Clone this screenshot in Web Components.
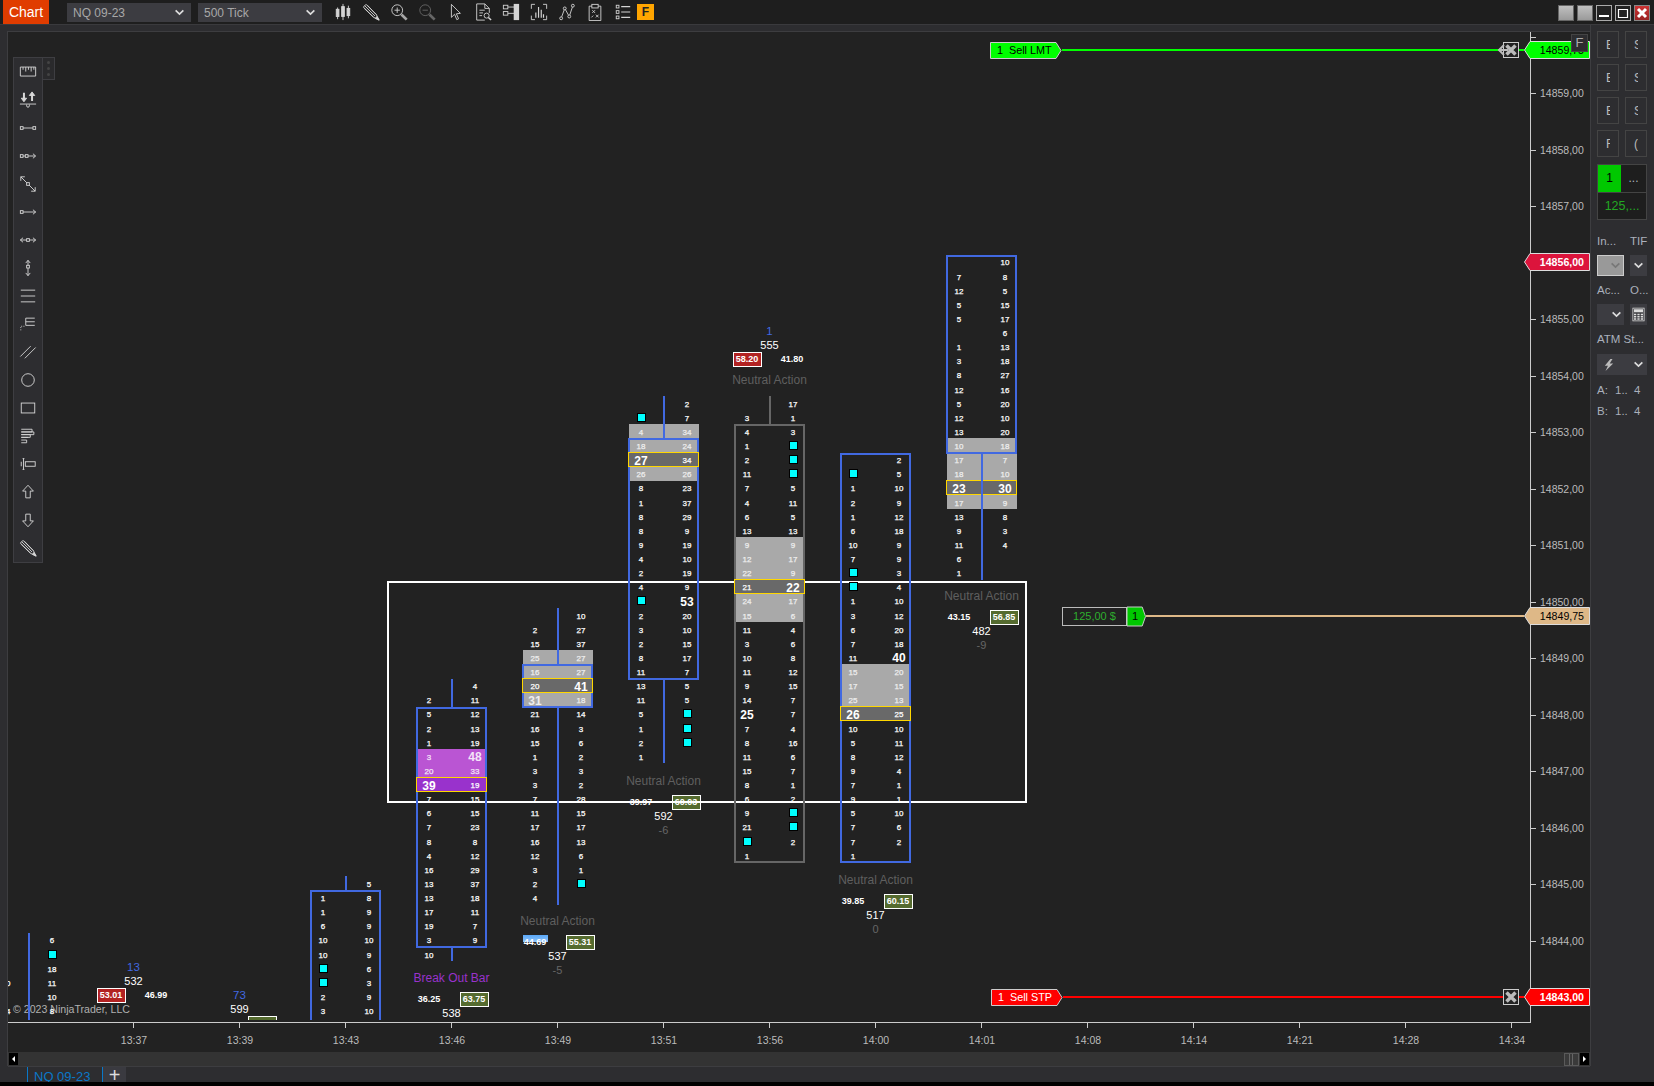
<!DOCTYPE html>
<html>
<head>
<meta charset="utf-8">
<title>Chart</title>
<style>
  html, body { margin: 0; padding: 0; background: #000; }
  body { width: 1654px; height: 1086px; overflow: hidden; font-family: "Liberation Sans", Arial, sans-serif; }
  nt-app { display: block; }
</style>
</head>
<body>
<nt-app>
  <nt-toolbar slot="top"></nt-toolbar>
  <nt-chart slot="chart">
    <fp-stats slot="plot" x="133.5" pct-y="995" reverse left="53.01" right="46.99" red="left" volume="532" delta="13"></fp-stats>
    <fp-stats slot="plot" x="239.5" pct-y="1023" reverse left="45.45" right="54.55" green="right" volume="599" delta="73"></fp-stats>
    <fp-stats slot="plot" x="451.5" pct-y="999" signal="Break Out Bar" purple left="36.25" right="63.75" green="right" volume="538" delta="-1"></fp-stats>
    <fp-stats slot="plot" x="557.5" pct-y="942" signal="Neutral Action" flag left="44.69" right="55.31" green="right" volume="537" delta="-5"></fp-stats>
    <fp-stats slot="plot" x="663.5" pct-y="801.7" signal="Neutral Action" left="39.97" right="60.03" green="right" volume="592" delta="-6"></fp-stats>
    <fp-stats slot="plot" x="769.5" pct-y="359" reverse signal="Neutral Action" left="58.20" right="41.80" red="left" volume="555" delta="1"></fp-stats>
    <fp-stats slot="plot" x="875.5" pct-y="900.7" signal="Neutral Action" left="39.85" right="60.15" green="right" volume="517" delta="0"></fp-stats>
    <fp-stats slot="plot" x="981.5" pct-y="617" signal="Neutral Action" left="43.15" right="56.85" green="right" volume="482" delta="-9"></fp-stats>

    <fp-bar slot="plot" x="28.5" first="63" wick="63,69" rows=". 6,. #,. 18,10 11,. 10,14 8,. 5"></fp-bar>
    <fp-bar slot="plot" x="345.5" first="59" box="60,70" wick="59,59" rows=". 5,1 8,1 9,6 9,10 10,10 9,# 6,# 3,2 9,3 10,4 7"></fp-bar>
    <fp-bar slot="plot" x="451.5" first="45" box="47,63" wick="45,46;64,64"
      rows=". 4,2 11,5 12,2 13,1 19,p:3 +48,p:20 33,q:+39 19,7 15,6 15,7 23,8 8,4 12,16 29,13 37,13 18,17 11,19 7,3 9,10 ."></fp-bar>
    <fp-bar slot="plot" x="557.5" first="40" box="44,46" wick="40,43;47,60"
      rows=". 10,2 27,15 37,g:25 27,g:16 27,k:20 +41,g:+31 18,21 14,16 3,15 6,1 2,3 3,3 2,7 28,11 15,17 17,16 13,12 6,3 1,2 #,4 ."></fp-bar>
    <fp-bar slot="plot" x="663.5" first="25" box="28,44" wick="25,27;45,50"
      rows=". 2,# 7,g:4 34,g:18 24,k:+27 34,g:26 26,8 23,1 37,8 29,8 9,9 19,4 10,2 19,4 9,# +53,2 20,3 10,2 15,8 17,11 7,13 5,11 5,5 #,1 #,2 #,1 ."></fp-bar>
    <fp-bar slot="plot" x="769.5" first="25" box="27,57" wick="25,26" gray
      rows=". 17,3 1,4 3,1 #,2 #,11 #,7 5,4 11,6 5,13 13,g:9 9,g:12 17,g:22 9,k:21 +22,g:24 17,g:15 6,11 4,3 6,10 8,11 12,9 15,14 7,+25 7,7 4,8 16,11 6,15 7,8 1,6 2,9 #,21 #,# 2,1 ."></fp-bar>
    <fp-bar slot="plot" x="875.5" first="29" box="29,57"
      rows=". 2,# 5,1 10,2 9,1 12,6 18,10 9,7 9,# 3,# 4,1 10,3 12,6 20,7 18,11 +40,g:15 20,g:17 15,g:25 13,k:+26 25,10 10,5 11,8 12,9 4,7 1,9 1,5 10,7 6,7 2,1 ."></fp-bar>
    <fp-bar slot="plot" x="981.5" first="15" box="15,28" wick="29,37"
      rows=". 10,7 8,12 5,5 15,5 17,. 6,1 13,3 18,8 27,12 16,5 20,12 10,13 20,g:10 18,g:17 7,g:18 10,k:+23 +30,g:17 9,13 8,9 3,11 4,6 .,1 ."></fp-bar>

    <nt-copyright slot="plot">© 2023 NinjaTrader, LLC</nt-copyright>
    <nt-draw-rect slot="plot" left="379" top="549" width="640" height="222"></nt-draw-rect>

    <nt-draw-tools slot="plot"></nt-draw-tools>

    <nt-order-line y="50" from="990" kind="lmt" qty="1" label="Sell LMT" price="14859,75"></nt-order-line>
    <nt-order-line y="997" from="991" kind="stp" qty="1" label="Sell STP" price="14843,00"></nt-order-line>
    <nt-order-line y="616" from="1062" kind="pos" qty="1" label="125,00 $" price="14849,75"></nt-order-line>
    <nt-order-line y="262" from="1524" kind="alert" price="14856,00"></nt-order-line>
    <nt-f-button>F</nt-f-button>
  </nt-chart>
  <nt-order-panel slot="side"></nt-order-panel>
  <nt-tabs slot="bottom"></nt-tabs>
</nt-app>

<script>
const ICONS = {
  // top toolbar
  candles: '<path d="M4 5v13M10 1v18M16 3v14"/><rect x="2.5" y="7" width="3" height="8" fill="currentColor"/><rect x="8.5" y="4" width="3" height="11" fill="currentColor"/><rect x="14.5" y="6" width="3" height="8" fill="currentColor"/>',
  pencil: '<path d="M1.5 4.5 4.5 1.5 16 13l3 6-6-3z"/><path d="M3 3 14.5 14.5M6 2.5 16 13M2.5 6 13 16" /><path d="M16.5 15 19 19l-4-2z" fill="currentColor"/>',
  zoomin: '<circle cx="8" cy="8" r="6"/><path d="M8 5v6M5 8h6"/><path d="M12.7 12.7 18.5 18.5" stroke-width="3" opacity=".75"/>',
  zoomout: '<circle cx="8" cy="8" r="6"/><path d="M5 8h6"/><path d="M12.7 12.7 18.5 18.5" stroke-width="3"/>',
  cursor: '<path d="M6 1.5V16l3.5-3.5 2.5 6 2-1-2.5-5.5 4.5-.5z"/>',
  docsearch: '<path d="M12 19H3V1h9l5 5v5M12 1v5h5M6 8h6M6 11h4M6 14h3"/><circle cx="14" cy="14" r="2.8"/><path d="M16 16l3 3" stroke-width="1.6"/>',
  tree: '<rect x="1.5" y="2.5" width="5" height="4"/><rect x="1.5" y="9.5" width="5" height="4"/><path d="M6.5 4.500h7M6.500 11.500h7"/><rect x="13" y="1" width="6" height="18" fill="currentColor" stroke="none"/>',
  bracket: '<path d="M5.500 1.500h-4v5M14.500 1.500h4v5M1.500 14v4.500h4M18.500 14v4.500h-4"/><path d="M6.500 16.500v-6M9.500 16.500v-12M12.500 16.500v-9M15 16.500v-4" stroke-width="1.300"/>',
  linechart: '<path d="M3.500 17 7.500 6l5 9 4-12"/><circle cx="3.500" cy="17" r="1.600" fill="#222"/><circle cx="7.500" cy="6" r="1.600" fill="#222"/><circle cx="12.500" cy="15" r="1.600" fill="#222"/><circle cx="16.500" cy="3" r="1.600" fill="#222"/>',
  clipboard: '<path d="M6.500 3.500h-3v16h13v-16h-3"/><rect x="6.500" y="1.500" width="7" height="4"/><path d="M7 8l3 3M10 8l-3 3M11 13l3 3M14 13l-3 3M6 16l2-2"/>',
  list: '<rect x="2.500" y="2.500" width="3" height="3"/><rect x="2.500" y="8.500" width="3" height="3"/><rect x="2.500" y="14.500" width="3" height="3"/><path d="M8 4h10M8 10h10M8 16h10" stroke-width="1.300"/>',
  // drawing tools
  ruler: '<path d="M1.500 4.500h17v10h-17zM4.500 4.500v3M7.500 4.500v5M10.500 4.500v3M13.500 4.500v5M16.500 4.500v3" />',
  buysell: '<path d="M5.500 2v8M14.500 3v8" stroke-width="2.200"/><path d="M2.500 8 5.500 12 8.500 8zM11.500 5 14.500 1l3 4z" fill="currentColor"/><path d="M1 14.500h18M8.500 15v1.500a1.500 1.500 0 0 0 3 0V15"/>',
  line: '<rect x="1.500" y="8.500" width="3" height="3"/><rect x="15.500" y="8.500" width="3" height="3"/><path d="M4.500 10h11"/>',
  ray: '<rect x="1.500" y="8.500" width="3" height="3"/><rect x="7" y="8.500" width="3" height="3"/><path d="M4.500 10H7M10 10h8M15.500 7.500 18.500 10l-3 2.500"/>',
  diag: '<path d="M2 2l16 16M2 6.500V2h4.500M18 13.500V18h-4.500"/><rect x="8.500" y="8.500" width="3" height="3" fill="#2d2d30"/>',
  arrowline: '<rect x="1.500" y="8.500" width="3" height="3"/><path d="M4.500 10h14M15.500 7.500 18.500 10l-3 2.500"/>',
  hrange: '<path d="M1.500 10h17M4.500 7.500 1.500 10l3 2.500M15.500 7.500l3 2.500-3 2.500"/><rect x="8.500" y="8.500" width="3" height="3" fill="#2d2d30"/>',
  vrange: '<path d="M10 1.500v17M7.500 4.500 10 1.500l2.500 3M7.500 15.500 10 18.500l2.500-3"/><rect x="8.500" y="7" width="3" height="3" fill="#2d2d30"/>',
  hlines: '<path d="M2 3.500h16M2 10h16M2 16.500h16"/>',
  fib: '<path d="M7.500 3.500h10M7.500 7.500h10M7.500 11.500h10M7.500 3.500v8"/><path d="M2 17v-4.500h5" stroke-dasharray="1 1.500"/>',
  channel: '<path d="M1.500 15 13 3.500M6.500 17 18.500 5"/>',
  circle: '<circle cx="10" cy="10" r="7"/>',
  rect: '<rect x="2.500" y="4.500" width="15" height="11"/>',
  stairs: '<path d="M2.500 2.500h12v3h-12M2.500 5.500h14v3h-14M2.500 8.500h10v3h-10M2.500 11.500h8M2.500 14.500h6v3h-6"/>',
  textbox: '<rect x="7" y="7.500" width="11" height="5"/><path d="M2.500 7.500v5M6 4h-2M6 16h-2M5 4v12"/>',
  up: '<path d="M10 2.500 4 9h3.500v7.500h5V9H16z"/>',
  down: '<path d="M10 17.500 4 11h3.500V3.500h5V11H16z"/>',
  bolt: '<path d="M12 1.500 4 11h4.500L5 18.500 16 8h-5l4-6.500z" fill="currentColor" stroke="none"/>',
  chev: '<path d="M3 6l7 7 7-7" stroke-width="3"/>',
  calc: '<rect x="2.500" y="1.500" width="15" height="17"/><rect x="4" y="3" width="12" height="4" fill="currentColor" stroke="none"/><path d="M4 10h3M8.500 10h3M13 10h3M4 13h3M8.500 13h3M13 13h3M4 16h3M8.500 16h3M13 16h3" stroke-width="2"/>',
};

class NtIcon extends HTMLElement {
  connectedCallback() {
    const size = this.getAttribute('size') || 20;
    this.attachShadow({ mode: 'open' });
    this.shadowRoot.innerHTML = `
      <style>
        :host { display: inline-flex; align-items: center; justify-content: center; color: #d4d4d4; }
        svg { display: block; fill: none; stroke: currentColor; stroke-width: 1; }
      </style>
      <svg width="${size}" height="${size}" viewBox="0 0 20 20">${ICONS[this.getAttribute('name')] || ''}</svg>`;
  }
}
customElements.define('nt-icon', NtIcon);

class NtApp extends HTMLElement {
  connectedCallback() {
    this.attachShadow({ mode: 'open' });
    this.shadowRoot.innerHTML = `
      <style>
        :host { display: block; width: 1654px; height: 1086px; background: #000; overflow: hidden; }
        .main { display: flex; height: 1041px; background: #2d2d30; }
        .gutter { width: 7px; flex: none; }
      </style>
      <slot name="top"></slot>
      <div class="main">
        <div class="gutter"></div>
        <slot name="chart"></slot>
        <slot name="side"></slot>
      </div>
      <slot name="bottom"></slot>`;
  }
}
customElements.define('nt-app', NtApp);

class NtToolbar extends HTMLElement {
  connectedCallback() {
    const names = ['candles','pencil','zoomin','zoomout','cursor','docsearch','tree','bracket','linechart','clipboard','list'];
    this.attachShadow({ mode: 'open' });
    this.shadowRoot.innerHTML = `
      <style>
        :host {
          display: flex; align-items: stretch; height: 24px; box-sizing: content-box;
          background: #1e1e1e; border-bottom: 1px solid #3a3a3d;
          font: 12px "Liberation Sans", Arial, sans-serif; padding-left: 3px;
        }
        .title { width: 46px; background: #e03c00; color: #fff; font-size: 14px; line-height: 24px; text-align: center; margin-right: 11px; }
        .combo {
          width: 124px; height: 19px; margin: 3px 0 0 7px; background: #3c3c41; color: #a8a8a8;
          display: flex; align-items: center; justify-content: space-between; padding: 0 6px; box-sizing: border-box;
        }
        .combo nt-icon { color: #ddd; }
        .icons { display: flex; margin-left: 7px; }
        .icons nt-icon { width: 28px; }
        .icons nt-icon.dim { color: #666; }
        .fbox {
          width: 17px; height: 16px; margin-top: 4px; background: #ffa500; color: #222;
          font-weight: bold; font-size: 12px; line-height: 16px; text-align: center;
        }
        .win { margin-left: auto; display: flex; gap: 3px; padding: 5px 4px 0 0; }
        .win span {
          width: 16px; height: 16px; box-sizing: border-box; display: flex; align-items: center; justify-content: center;
          background: linear-gradient(#c0c0c0, #9a9a9a); border: 1px solid #666;
        }
        .win .dark { background: #222; border-color: #aaa; }
        .win .red { background: linear-gradient(#c33, #922); border-color: #888; }
      </style>
      <div class="title">Chart</div>
      <div class="combo">NQ 09-23<nt-icon name="chev" size="11"></nt-icon></div>
      <div class="combo">500 Tick<nt-icon name="chev" size="11"></nt-icon></div>
      <div class="icons">${names.map(n => `<nt-icon name="${n}" size="18" class="${n === 'zoomout' ? 'dim' : ''}"></nt-icon>`).join('')}</div>
      <div class="fbox">F</div>
      <div class="win">
        <span></span>
        <span></span>
        <span class="dark"><svg width="12" height="12"><path d="M1 9h10" stroke="#fff" stroke-width="2"/></svg></span>
        <span class="dark"><svg width="12" height="12"><path d="M1.500 2.500h9v8h-9z M1 2.500h10" fill="none" stroke="#fff" stroke-width="1.200"/></svg></span>
        <span class="red"><svg width="12" height="12"><path d="M2 2l8 8M10 2l-8 8" stroke="#fff" stroke-width="3"/></svg></span>
      </div>`;
  }
}
customElements.define('nt-toolbar', NtToolbar);

class NtChart extends HTMLElement {
  connectedCallback() {
    const prices = [];
    for (let p = 14860; p >= 14843; p--) prices.push(p);
    const times = ['13:37','13:39','13:43','13:46','13:49','13:51','13:56','14:00','14:01','14:08','14:14','14:21','14:28','14:34'];
    this.attachShadow({ mode: 'open' });
    this.shadowRoot.innerHTML = `
      <style>
        :host {
          display: grid; position: relative; margin-top: 6px; width: 1583px; height: 1035px; flex: none;
          grid-template-columns: 1523px 59px; grid-template-rows: 991px 29px 15px;
          background: #222; border-top: 1px solid #3d3d40; border-left: 1px solid #3d3d40; box-sizing: border-box;
          font: 10.5px "Liberation Sans", Arial, sans-serif; color: #bbb;
        }
        .plotwrap { grid-column: 1; grid-row: 1; border-bottom: 1px solid #ccc; border-right: 1px solid #ccc; box-sizing: border-box; }
        .plot { position: relative; overflow: hidden; height: 988px; }
        .prices { grid-column: 2; grid-row: 1 / 3; overflow: hidden; }
        .prices div {
          height: 56.5px; display: flex; align-items: center; position: relative; padding-left: 9px; box-sizing: border-box;
        }
        .prices div::before { content: ''; position: absolute; left: 0; top: 50%; width: 5px; height: 1px; background: #ccc; }
        .prices .list { display: block; height: auto; padding: 0; margin-top: -23.35px; }
        .prices .list::before { display: none; }
        .times { grid-column: 1; grid-row: 2; overflow: hidden; }
        .times .list { display: flex; margin-left: 72.500px; }
        .times span { flex: 0 0 106px; text-align: center; position: relative; padding: 11px 0 0 1px; box-sizing: border-box; line-height: 12px; }
        .times span::before { content: ''; position: absolute; left: 52.500px; top: 0; width: 1px; height: 5px; background: #ccc; }
        .scroll {
          grid-column: 1 / 3; grid-row: 3; background: #333; display: flex; justify-content: space-between; align-items: center;
          padding: 0 1px; border-bottom: 1px solid #3d3d40; box-sizing: border-box;
        }
        .scroll b { display: block; width: 9px; height: 12px; background: #000; position: relative; }
        .scroll b::after {
          content: ''; position: absolute; top: 3px; left: 3px; border: 3px solid transparent; border-right: 3px solid #fff; border-left: 0;
        }
        .scroll .next::after { border-right: 0; border-left: 3px solid #fff; }
        .right { display: flex; gap: 1px; align-items: center; }
        .thumb {
          width: 15px; height: 13px; box-sizing: border-box; border: 1px solid #5a5a5a;
          background: linear-gradient(90deg, #3a3a3a 4px, #666 4px, #666 5px, #3a3a3a 5px, #3a3a3a 7px, #666 7px, #666 8px, #3a3a3a 8px);
        }
      </style>
      <div class="plotwrap"><div class="plot"><slot name="plot"></slot></div></div>
      <div class="prices"><div class="list">${prices.map(p => `<div>${p === 14860 ? '' : p + ',00'}</div>`).join('')}</div></div>
      <div class="times"><div class="list">${times.map(t => `<span>${t}</span>`).join('')}</div></div>
      <div class="scroll">
        <b class="prev"></b>
        <div class="right"><div class="thumb"></div><b class="next"></b></div>
      </div>
      <slot></slot>`;
  }
}
customElements.define('nt-chart', NtChart);

// footprint bar: a column of bid/ask rows, placed on the chart by its x and tick row
class FpBar extends HTMLElement {
  connectedCallback() {
    const ROW = 14.125;
    const x = parseFloat(this.getAttribute('x'));
    const first = parseInt(this.getAttribute('first'));
    const cell = v => {
      if (v === '.') return '<span></span>';
      if (v === '#') return '<span><i></i></span>';
      if (v[0] === '+') return `<span class="big">${v.slice(1)}</span>`;
      return `<span>${v}</span>`;
    };
    const rows = this.getAttribute('rows').split(',').map(r => {
      let cls = '';
      if (r[1] === ':') { cls = r[0]; r = r.slice(2); }
      const [l, rr] = r.split(' ');
      return `<div class="row ${cls}">${cell(l)}${cell(rr)}</div>`;
    }).join('');
    let box = '';
    if (this.hasAttribute('box')) {
      const [a, b] = this.getAttribute('box').split(',').map(Number);
      box = `<div class="box" style="top:${(a - first) * ROW}px;height:${(b - a + 1) * ROW + 1}px"></div>`;
    }
    let wicks = '';
    if (this.hasAttribute('wick')) {
      wicks = this.getAttribute('wick').split(';').map(w => {
        const [a, b] = w.split(',').map(Number);
        return `<div class="wick" style="top:${(a - first) * ROW}px;height:${(b - a + 1) * ROW}px"></div>`;
      }).join('');
    }
    const color = this.hasAttribute('gray') ? '#666' : '#4169e1';
    this.attachShadow({ mode: 'open' });
    this.shadowRoot.innerHTML = `
      <style>
        :host {
          display: block; position: absolute; width: 71px;
          left: ${x - 8 - 35.5}px; top: ${50 + first * ROW - ROW / 2 - 32}px;
          font: 8px "Liberation Sans", Arial, sans-serif; color: #fff;
          -webkit-text-stroke: .25px currentColor;
        }
        .row {
          height: ${ROW}px; display: flex; justify-content: space-between; align-items: center;
          padding: 0 2px 0 3px; box-sizing: border-box; position: relative;
        }
        .row span { width: 20px; text-align: center; position: relative; top: 1px; z-index: 1; display: flex; justify-content: center; }
        .row .big { font-size: 12px; font-weight: bold; -webkit-text-stroke: 0; }
        .row i { display: block; position: relative; top: -1px; width: 9px; height: 9px; box-sizing: border-box; background: #0ff; border: 1px solid #000; }
        .row::before { content: ''; position: absolute; top: 0; bottom: 0; left: 1px; right: 0; }
        .g::before { background: #a9a9a9; }
        .p::before { background: #ba55d3; }
        .k { z-index: 2; }
        .q { z-index: 2; }
        .g { color: #eee; }
        .p { color: #f4e4f8; }
        .k::before, .q::before { left: 0; top: -.5px; bottom: -.5px; border: 1px solid #ffd700; background: #696969; }
        .q::before { background: #9932cc; }
        .box { position: absolute; left: 0; width: 71px; box-sizing: border-box; border: 2px solid ${color}; z-index: 1; }
        .wick { position: absolute; left: 35px; width: 2px; background: ${color}; z-index: 3; }
      </style>
      ${rows}${box}${wicks}`;
  }
}
customElements.define('fp-bar', FpBar);

class FpStats extends HTMLElement {
  connectedCallback() {
    const x = parseFloat(this.getAttribute('x'));
    const y = parseFloat(this.getAttribute('pct-y'));
    const rev = this.hasAttribute('reverse');
    const sig = this.getAttribute('signal');
    const mark = this.hasAttribute('red') ? 'red' : 'green';
    const side = this.getAttribute(mark);
    const cell = s => `<span class="${side === s ? mark : ''} ${s === 'left' && this.hasAttribute('flag') ? 'flag' : ''}">${this.getAttribute(s)}</span>`;
    this.attachShadow({ mode: 'open' });
    this.shadowRoot.innerHTML = `
      <style>
        :host {
          display: flex; position: absolute; width: 110px; flex-direction: ${rev ? 'column-reverse' : 'column'};
          left: ${x - 8 - 55}px; top: ${y - 32 - (rev ? 35 : 28)}px; align-items: center;
          font: 11px "Liberation Sans", Arial, sans-serif; color: #fff;
        }
        div { height: 14px; line-height: 14px; white-space: nowrap; text-align: center; }
        .sig { font-size: 12px; color: ${this.hasAttribute('purple') ? '#9932cc' : '#5f5f5f'}; margin: ${rev ? '7px 0 0' : '0 0 7px'}; }
        .pct { display: flex; gap: 16px; font-size: 9px; font-weight: bold; }
        .pct span { width: 29px; height: 15px; line-height: 14px; box-sizing: border-box; text-align: center; position: relative; z-index: 0; }
        .red, .green { border: 1px solid #fff; line-height: 13px !important; }
        .red { background: #b22222; }
        .green { background: #556b2f; }
        .flag::before {
          content: ''; position: absolute; z-index: -1; left: 2px; right: 2px; top: 0; height: 7px;
          background: linear-gradient(#5aa8f8, #8ec4fb);
        }
        .delta { color: ${rev ? '#4169e1' : '#666'}; font-size: ${rev ? '11.5px' : '11px'}; }
      </style>
      ${sig ? `<div class="sig">${sig}</div>` : ''}
      <div class="pct">${cell('left')}${cell('right')}</div>
      <div>${this.getAttribute('volume')}</div>
      <div class="delta">${this.getAttribute('delta')}</div>`;
  }
}
customElements.define('fp-stats', FpStats);

class NtCopyright extends HTMLElement {
  connectedCallback() {
    this.attachShadow({ mode: 'open' });
    this.shadowRoot.innerHTML = `
      <style>
        :host { position: absolute; left: 5px; top: 970px; font: 10.6px/14px "Liberation Sans", Arial, sans-serif; color: #b0b0b0; white-space: nowrap; }
      </style>
      <slot></slot>`;
  }
}
customElements.define('nt-copyright', NtCopyright);

class NtDrawRect extends HTMLElement {
  connectedCallback() {
    const a = n => this.getAttribute(n);
    this.attachShadow({ mode: 'open' });
    this.shadowRoot.innerHTML = `
      <style>
        :host {
          position: absolute; display: block; box-sizing: border-box; border: 2px solid #fff;
          left: ${a('left')}px; top: ${a('top')}px; width: ${a('width')}px; height: ${a('height')}px;
        }
      </style>`;
  }
}
customElements.define('nt-draw-rect', NtDrawRect);

class NtDrawTools extends HTMLElement {
  connectedCallback() {
    const names = ['ruler','buysell','line','ray','diag','arrowline','hrange','vrange','hlines','fib','channel','circle','rect','stairs','textbox','up','down','pencil'];
    this.attachShadow({ mode: 'open' });
    this.shadowRoot.innerHTML = `
      <style>
        :host { position: absolute; left: 5px; top: 25px; display: flex; align-items: flex-start; z-index: 5; }
        .tools {
          width: 30px; box-sizing: border-box; background: #2d2d30; border: 1px solid #3e3e42;
          display: flex; flex-direction: column;
        }
        nt-icon { height: 28px; color: #d8d8d8; }
        nt-icon:first-child { height: 28px; }
        .grip {
          width: 12px; height: 23px; box-sizing: border-box; background: #2a2a2c; border: 1px solid #3e3e42; border-left: 0;
          display: flex; flex-direction: column; align-items: center; justify-content: space-evenly;
        }
        .grip i { width: 3px; height: 3px; border-radius: 2px; background: #444; }
      </style>
      <div class="tools">${names.map(n => `<nt-icon name="${n}" size="18"></nt-icon>`).join('')}</div>
      <div class="grip"><i></i><i></i><i></i></div>`;
  }
}
customElements.define('nt-draw-tools', NtDrawTools);

class NtOrderLine extends HTMLElement {
  connectedCallback() {
    const kind = this.getAttribute('kind');
    const from = parseFloat(this.getAttribute('from'));
    const y = parseFloat(this.getAttribute('y'));
    const qty = this.getAttribute('qty');
    const label = this.getAttribute('label');
    const price = this.getAttribute('price');
    const theme = {
      lmt: { c: '#00ff00', text: '#000' },
      stp: { c: '#ff0000', text: '#fff' },
      pos: { c: '#deb887', text: '#000' },
      alert: { c: '#dc143c', text: '#fff' },
    }[kind];
    const marker = `
      <div class="marker">
        <svg viewBox="0 0 66 18" preserveAspectRatio="none"><polygon points="0.5,9 6,0.5 65.500,0.500 65.500,17.500 6,17.500" fill="${theme.c}" stroke="#ddd"/></svg>
        <span>${price}</span>
      </div>`;
    let left = '';
    if (kind === 'lmt' || kind === 'stp') {
      left = `
        <div class="tag">
          <svg viewBox="0 0 72 17" preserveAspectRatio="none"><polygon points="0.5,0.500 66,0.500 71,8.500 66,16.500 0.5,16.500" fill="${theme.c}" stroke="#ccc"/></svg>
          <span class="q">${qty}</span><span>${label}</span>
        </div>`;
    }
    if (kind === 'pos') {
      left = `
        <div class="pnl">${label}</div>
        <div class="posq"><svg viewBox="0 0 20 19" preserveAspectRatio="none"><polygon points="0,0 16,0 19.500,9.500 16,19 0,19" fill="#00c800" stroke="#ccc"/></svg><span>${qty}</span></div>`;
    }
    const close = (kind === 'pos' || kind === 'alert') ? '' : `
      <svg class="x" width="16" height="16" viewBox="0 0 16 16">
        <rect x=".5" y=".5" width="15" height="15" fill="#222" stroke="#ccc"/>
        ${kind === 'lmt' ? '<path d="M1 3 -4 8 1 13M-3 8h8" fill="none" stroke="#bbb" stroke-width="2"/>' : ''}
        <path d="M3.500 3.500l9 9M12.500 3.500l-9 9" stroke="#bbb" stroke-width="3.500"/>
      </svg>
      <div class="line" style="flex:0 0 5px"></div>`;
    this.attachShadow({ mode: 'open' });
    this.shadowRoot.innerHTML = `
      <style>
        :host {
          position: absolute; display: flex; align-items: center; height: 20px; z-index: 6;
          left: ${from - 8}px; top: ${y - 32 - 10}px; width: ${1590 - from}px;
          font: 10.5px "Liberation Sans", Arial, sans-serif;
        }
        .line { flex: 1; height: 2px; background: ${theme.c}; }
        .tag, .marker, .posq { position: relative; display: flex; align-items: center; flex: none; }
        svg { overflow: visible; display: block; }
        .tag svg, .marker svg, .posq svg { position: absolute; inset: 0; width: 100%; height: 100%; }
        span { position: relative; }
        .tag { width: 72px; height: 17px; color: ${theme.text}; font-size: 10.8px; padding-left: 7px; box-sizing: border-box; }
        .tag .q { width: 12px; }
        .x { flex: none; }
        .marker { width: 66px; height: 18px; color: ${theme.text}; font-size: 10.6px; justify-content: flex-end; padding-right: 6px; box-sizing: border-box; font-weight: ${kind === 'pos' || kind === 'lmt' ? 'normal' : 'bold'}; }
        .pnl {
          width: 65px; height: 19px; box-sizing: border-box; border: 1px solid #bbb; background: #222; color: #2eae2e;
          text-align: center; line-height: 17px; font-size: 11px; flex: none;
        }
        .posq { width: 19px; height: 19px; font-size: 11px; color: #000; padding-left: 5px; box-sizing: border-box; }
      </style>
      ${left}
      ${kind === 'alert' ? '' : '<div class="line"></div>'}
      ${close}
      ${marker}`;
  }
}
customElements.define('nt-order-line', NtOrderLine);

class NtFButton extends HTMLElement {
  connectedCallback() {
    this.attachShadow({ mode: 'open' });
    this.shadowRoot.innerHTML = `
      <style>
        :host {
          position: absolute; left: 1563px; top: 2px; width: 17px; height: 18px; box-sizing: border-box; z-index: 7;
          background: #2d2d30; border: 1px solid #444; color: #aaa; font: 13px/16px "Liberation Sans", Arial, sans-serif; text-align: center;
        }
      </style>
      <slot></slot>`;
  }
}
customElements.define('nt-f-button', NtFButton);

class NtOrderPanel extends HTMLElement {
  connectedCallback() {
    const btn = t => `<div class="btn"><span>${t}</span></div>`;
    this.attachShadow({ mode: 'open' });
    this.shadowRoot.innerHTML = `
      <style>
        :host {
          display: block; flex: 1; box-sizing: border-box; padding: 6px 0 0 6px; background: #2d2d30; border-left: 1px solid #3d3d40;
          font: 12px "Liberation Sans", Arial, sans-serif; color: #aab0bc;
        }
        .btns { display: grid; grid-template-columns: 22px 22px; gap: 6px; width: 50px; }
        .btn {
          height: 27px; box-sizing: border-box; border: 1px solid #444; color: #bbb; display: flex; align-items: center; justify-content: center;
        }
        .btn span { display: block; width: 4px; overflow: hidden; line-height: 14px; }
        .qty { width: 50px; height: 56px; margin-top: 7px; box-sizing: border-box; border: 1px solid #444; background: #1e1e1e; }
        .qty .top { display: flex; height: 28px; border-bottom: 1px solid #444; box-sizing: border-box; }
        .qty b { width: 23px; background: #00c800; color: #000; font-weight: normal; font-size: 12px; line-height: 27px; text-align: center; }
        .qty i { flex: 1; font-style: normal; text-align: center; line-height: 26px; }
        .qty .pnl { text-align: center; line-height: 26px; color: #23a823; font-size: 12.5px; }
        .form { display: grid; grid-template-columns: 27px 17px; column-gap: 6px; margin-top: 11px; width: 50px; }
        .label { height: 21px; line-height: 21px; white-space: nowrap; overflow: visible; font-size: 11.5px; }
        .wide { grid-column: 1 / 3; }
        .combo { height: 21px; margin-top: 3px; background: #3c3c41; display: flex; align-items: center; justify-content: flex-end; padding-right: 2px; }
        .combo nt-icon { color: #ddd; }
        .combo.off { background: #999; border: 1px solid #ccc; box-sizing: border-box; }
        .combo.off nt-icon { color: #777; }
        .combo.c { justify-content: center; padding: 0; }
        .combo.atm { justify-content: space-between; padding: 0 3px 0 5px; margin-top: 4px; }
        .ab { display: grid; grid-template-columns: 18px 19px 13px; height: 21px; line-height: 21px; grid-column: 1 / 3; font-size: 11.5px; }
        .ab.first { margin-top: 5px; }
        nt-icon.bolt { color: #bbb; }
      </style>
      <div class="btns">
        ${btn('E')}${btn('S')}${btn('E')}${btn('S')}${btn('E')}${btn('S')}${btn('F')}${btn('(')}
      </div>
      <div class="qty">
        <div class="top"><b>1</b><i>...</i></div>
        <div class="pnl">125,...</div>
      </div>
      <div class="form">
        <div class="label">In...</div><div class="label">TIF</div>
        <div class="combo off"><nt-icon name="chev" size="11"></nt-icon></div>
        <div class="combo c"><nt-icon name="chev" size="11"></nt-icon></div>
        <div class="label" style="margin-top:4px">Ac...</div><div class="label" style="margin-top:4px">O...</div>
        <div class="combo"><nt-icon name="chev" size="11"></nt-icon></div>
        <div class="combo c"><nt-icon name="calc" size="15"></nt-icon></div>
        <div class="label wide" style="margin-top:4px">ATM St...</div>
        <div class="combo atm wide"><nt-icon class="bolt" name="bolt" size="14"></nt-icon><nt-icon name="chev" size="11"></nt-icon></div>
        <div class="ab first"><span>A:</span><span>1..</span><span>4</span></div>
        <div class="ab"><span>B:</span><span>1..</span><span>4</span></div>
      </div>`;
  }
}
customElements.define('nt-order-panel', NtOrderPanel);

class NtTabs extends HTMLElement {
  connectedCallback() {
    this.attachShadow({ mode: 'open' });
    this.shadowRoot.innerHTML = `
      <style>
        :host {
          display: flex; height: 16px; background: #2d2d30; padding-left: 27px; overflow: hidden;
          font: 13px/22px "Liberation Sans", Arial, sans-serif;
        }
        .tab {
          width: 76px; height: 22px; box-sizing: border-box; border-left: 1px solid #0a78c8; border-right: 1px solid #0a78c8;
          color: #0a78c8; padding-left: 6px;
        }
        .add {
          width: 23px; background: #3a3a40; color: #ddd; font-size: 20px; text-align: center; line-height: 18px;
        }
      </style>
      <div class="tab">NQ 09-23</div>
      <div class="add">+</div>`;
  }
}
customElements.define('nt-tabs', NtTabs);
</script>
</body>
</html>
